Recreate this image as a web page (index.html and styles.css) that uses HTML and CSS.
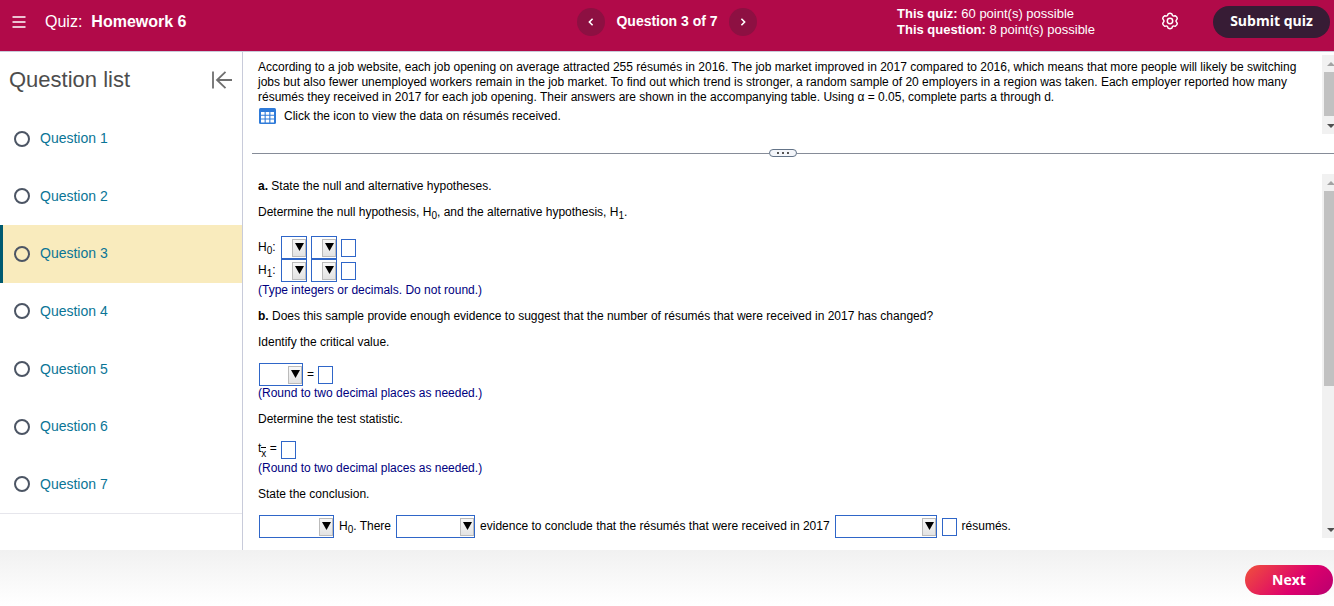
FILE: index.html
```html
<!DOCTYPE html>
<html lang="en">
<head>
<meta charset="utf-8">
<title>Quiz: Homework 6</title>
<link rel="stylesheet" href="styles.css">
</head>
<body>
<header class="topbar">
  <div class="topbar-left">
    <button class="plain-btn menu-btn" aria-label="Menu">
      <svg width="14" height="12" viewBox="0 0 14 12" fill="none" stroke="#fff" stroke-width="1.4"><path d="M0.5 1H13.5M0.5 6H13.5M0.5 11H13.5"/></svg>
    </button>
    <div class="quiz-name"><span>Quiz:</span><strong>Homework 6</strong></div>
  </div>
  <nav class="pager" aria-label="Question navigation">
    <button class="round-btn" aria-label="Previous question"><svg width="6" height="8" viewBox="0 0 6 8" fill="none" stroke="#fff" stroke-width="1.6"><path d="M4.6 0.8L1.4 4L4.6 7.2"/></svg></button>
    <span class="pager-label">Question 3 of 7</span>
    <button class="round-btn" aria-label="Next question"><svg width="6" height="8" viewBox="0 0 6 8" fill="none" stroke="#fff" stroke-width="1.6"><path d="M1.4 0.8L4.6 4L1.4 7.2"/></svg></button>
  </nav>
  <div class="topbar-right">
    <div class="points">
      <div><strong>This quiz:</strong> 60 point(s) possible</div>
      <div><strong>This question:</strong> 8 point(s) possible</div>
    </div>
    <button class="plain-btn gear-btn" aria-label="Settings">
      <svg width="18" height="18" viewBox="0 0 18 18" fill="none" stroke="#fff" stroke-width="1.5" stroke-linejoin="round"><path d="M7.200 1.800Q9 .6 10.800 1.800L11.500 3.500Q12 4 12.700 3.900L14.500 3.800Q16.300 4.700 16.300 6.700L15.200 8.300Q14.900 9 15.200 9.700L16.300 11.300Q16.300 13.300 14.500 14.200L12.700 14.100Q12 14 11.500 14.500L10.800 16.200Q9 17.400 7.200 16.200L6.500 14.500Q6 14 5.300 14.100L3.500 14.200Q1.700 13.300 1.700 11.300L2.800 9.700Q3.100 9 2.800 8.300L1.700 6.700Q1.700 4.700 3.500 3.800L5.300 3.900Q6 4 6.500 3.500z"/><circle cx="9" cy="9" r="2.700"/></svg>
    </button>
    <button class="submit-btn">Submit quiz</button>
  </div>
</header>

<main class="workspace">
  <aside class="sidebar">
    <div class="sidebar-head">
      <h1>Question list</h1>
      <button class="plain-btn" aria-label="Collapse question list">
        <svg width="20" height="18" viewBox="0 0 20 18" fill="none" stroke="#6f6f6f" stroke-width="1.8"><path d="M1 0.500V17.500M20 9H5.500M13.500 0.800L5 9L13.500 17.200"/></svg>
      </button>
    </div>
    <ul class="question-list">
      <li><a href="#q1"><span class="ring"></span>Question 1</a></li>
      <li><a href="#q2"><span class="ring"></span>Question 2</a></li>
      <li class="current"><a href="#q3" aria-current="page"><span class="ring"></span>Question 3</a></li>
      <li><a href="#q4"><span class="ring"></span>Question 4</a></li>
      <li><a href="#q5"><span class="ring"></span>Question 5</a></li>
      <li><a href="#q6"><span class="ring"></span>Question 6</a></li>
      <li><a href="#q7"><span class="ring"></span>Question 7</a></li>
    </ul>
  </aside>

  <section class="content">
    <div class="pane stem">
      <div class="pane-body">
        <p>According to a job website, each job opening on average attracted 255 résumés in 2016. The job market improved in 2017 compared to 2016, which means that more people will likely be switching jobs but also fewer unemployed workers remain in the job market. To find out which trend is stronger, a random sample of 20 employers in a region was taken. Each employer reported how many résumés they received in 2017 for each job opening. Their answers are shown in the accompanying table. Using α = 0.05, complete parts a through d.</p>
        <div class="data-link">
          <button class="plain-btn" aria-label="View data">
            <svg width="17" height="16" viewBox="0 0 17 16"><rect width="17" height="16" rx="1.500" fill="#2f7bd9"/><g fill="#fff"><path d="M2 4h3.600v2.800H2zM6.700 4h3.600v2.800H6.700zM11.400 4H15v2.800h-3.600zM2 7.800h3.600v2.800H2zM6.700 7.800h3.600v2.800H6.700zM11.400 7.800H15v2.800h-3.600zM2 11.600h3.600v2.800H2zM6.700 11.600h3.600v2.800H6.700zM11.400 11.600H15v2.800h-3.600z"/></g></svg>
          </button>
          <span>Click the icon to view the data on résumés received.</span>
        </div>
      </div>
      <div class="scrollbar" aria-hidden="true"><i class="arrow up"></i><i class="thumb"></i><i class="arrow down"></i></div>
    </div>

    <div class="splitter"><button class="grip" aria-label="Resize panes"><i></i><i></i><i></i></button></div>

    <div class="pane parts">
      <div class="pane-body">
        <p><strong>a.</strong> State the null and alternative hypotheses.</p>
        <p>Determine the null hypothesis, H<sub>0</sub>, and the alternative hypothesis, H<sub>1</sub>.</p>
        <div class="hypotheses">
          <div class="answer-row"><span class="hyp-label">H<sub>0</sub>:</span><select class="drop tiny" aria-label="H0 parameter"></select><select class="drop tiny" aria-label="H0 relation"></select><input class="blank" type="text" aria-label="H0 value"></div>
          <div class="answer-row"><span class="hyp-label">H<sub>1</sub>:</span><select class="drop tiny" aria-label="H1 parameter"></select><select class="drop tiny" aria-label="H1 relation"></select><input class="blank" type="text" aria-label="H1 value"></div>
          <p class="note">(Type integers or decimals. Do not round.)</p>
        </div>
        <p><strong>b.</strong> Does this sample provide enough evidence to suggest that the number of résumés that were received in 2017 has changed?</p>
        <p>Identify the critical value.</p>
        <div class="spaced">
          <div class="answer-row inset"><select class="drop small" aria-label="Critical value symbol"></select><span>=</span><input class="blank" type="text" aria-label="Critical value"></div>
          <p class="note">(Round to two decimal places as needed.)</p>
        </div>
        <p>Determine the test statistic.</p>
        <div>
          <div class="answer-row"><label for="tstat">t<span class="xbar">x</span> =</label><input class="blank" id="tstat" type="text"></div>
          <p class="note">(Round to two decimal places as needed.)</p>
        </div>
        <p>State the conclusion.</p>
        <div class="answer-row inset spaced conclusion">
          <select class="drop medium" aria-label="Decision"></select><span>H<sub>0</sub>. There</span><select class="drop medium-wide" aria-label="Is or is not sufficient"></select><span>evidence to conclude that the résumés that were received in 2017</span><select class="drop wide" aria-label="Comparison"></select><input class="blank" id="last" type="text"><label for="last">résumés.</label>
        </div>
      </div>
      <div class="scrollbar" aria-hidden="true"><i class="arrow up"></i><i class="thumb"></i><i class="arrow down"></i></div>
    </div>
  </section>
</main>

<footer class="bottombar"><button class="next-btn">Next</button></footer>
</body>
</html>
```
FILE: styles.css
```css
* { box-sizing: border-box; }

body {
  margin: 0;
  min-height: 100vh;
  display: flex;
  flex-direction: column;
  background: #fff;
  color: #000;
  font: 12px/15px "Liberation Sans", Arial, sans-serif;
}

h1, p, ul { margin: 0; padding: 0; }
button, input, select { font: inherit; margin: 0; }
svg { display: block; }

.plain-btn { padding: 0; border: 0; background: none; }

/* Top bar */
.topbar {
  display: grid;
  grid-template-columns: 1fr auto 1fr;
  align-items: center;
  height: 52px;
  padding: 0 4px 8px 12px;
  background: #b10a49;
  border-bottom: 1px solid #c8cbda;
  color: #fff;
}
.topbar-left { display: flex; align-items: center; gap: 19px; }
.quiz-name { display: flex; gap: 9px; font-size: 16px; }
.pager { display: flex; align-items: center; gap: 11px; margin-right: 8px; }
.pager-label { font-size: 14px; font-weight: bold; }
.round-btn {
  display: grid;
  place-items: center;
  width: 28px;
  height: 28px;
  padding: 0;
  border: 0;
  border-radius: 50%;
  background: #8d1042;
}
.topbar-right { display: flex; align-items: center; justify-content: flex-end; }
.points { margin-right: 66px; font-size: 13px; line-height: 16px; }
.gear-btn { padding-bottom: 2px; }
.submit-btn {
  width: 117px;
  height: 32px;
  margin-left: 34px;
  padding: 0 0 2px;
  border: 0;
  border-radius: 16px;
  background: #371c35;
  color: #fff;
  font: bold 14px "Open Sans", sans-serif;
}

/* Page body */
.workspace { display: flex; flex: 1; }

.sidebar { width: 243px; flex: none; border-right: 1px solid #c8cbda; }
.sidebar-head {
  display: flex;
  align-items: center;
  justify-content: space-between;
  height: 58px;
  padding: 0 10px 3px 9px;
}
.sidebar-head h1 { font-size: 22px; font-weight: normal; color: #4d4d4d; line-height: 28px; }
.question-list {
  display: grid;
  grid-template-rows: repeat(7, 1fr);
  height: 404px;
  list-style: none;
  border-bottom: 1px solid #e6e6ec;
}
.question-list li { border-left: 3px solid transparent; }
.question-list a {
  display: flex;
  align-items: center;
  gap: 10px;
  height: 100%;
  padding-left: 11px;
  color: #0a7596;
  font-size: 14px;
  text-decoration: none;
}
.question-list .current { background: #f9ebbd; border-left-color: #005a70; }
.ring { width: 16px; height: 16px; border: 2px solid #4c5564; border-radius: 50%; }

.content { flex: 1; min-width: 0; display: flex; flex-direction: column; }
.pane { display: flex; }
.pane-body { flex: 1; min-width: 0; }
.stem { margin-top: 3px; height: 79px; }
.stem .pane-body { padding: 5px 5px 0 15px; }
.data-link { display: flex; align-items: center; gap: 8px; margin: 3px 0 0 1px; }

.splitter { display: flex; align-items: center; height: 38px; margin: 0 0 2px 9px; }
.splitter::before, .splitter::after { content: ""; height: 1px; background: #868c98; }
.splitter::before { flex: 517; }
.splitter::after { flex: 537; }
.grip {
  display: flex;
  align-items: center;
  justify-content: center;
  gap: 3px;
  width: 28px;
  height: 8px;
  padding: 0;
  border: 1px solid #647488;
  border-radius: 4px;
  background: #f4f6fa;
}
.grip i { width: 2px; height: 2px; background: #555; }

.parts { flex: 1; padding-bottom: 12px; }
.parts .pane-body { display: flex; flex-direction: column; gap: 11px; padding: 5px 0 0 15px; }

sub { font-size: 10px; line-height: 0; vertical-align: -3px; }
.note { color: #000080; }

/* Answer fields */
.answer-row { display: flex; align-items: center; gap: 4px; height: 23px; }
.inset { margin-left: 1px; }
.spaced { margin-top: 2px; }
.hypotheses { padding-top: 5px; }
.hypotheses .note { margin-top: 1px; }
.hyp-label { width: 19px; }
.drop {
  appearance: none;
  height: 23px;
  padding: 0;
  border: 1px solid #2f66c8;
  border-radius: 0;
  background: #fff url("data:image/svg+xml,%3Csvg xmlns='http://www.w3.org/2000/svg' width='14' height='18'%3E%3ClinearGradient id='g' x2='0' y2='1'%3E%3Cstop stop-color='%23f8f8f8'/%3E%3Cstop offset='1' stop-color='%23e2e2e2'/%3E%3C/linearGradient%3E%3Crect x='.5' y='.5' width='13' height='17' fill='url(%23g)' stroke='%23bbb'/%3E%3Cpath d='M3 4h9L7.500 12z'/%3E%3C/svg%3E") no-repeat right 2px;
}
.tiny { width: 26px; }
.small { width: 44px; }
.medium { width: 75px; }
.medium-wide { width: 79px; }
.wide { width: 102px; }
.blank { width: 15px; height: 18px; padding: 0; border: 1px solid #2f66c8; background: #fff; }
.xbar {
  display: inline-block;
  height: 11px;
  padding-top: 2px;
  border-top: 1px solid #000;
  font-size: 10px;
  line-height: 8px;
  vertical-align: -5px;
}
.conclusion { gap: 5px; }

/* Scroll bars */
.scrollbar { display: flex; flex-direction: column; width: 12px; padding: 7px 0 6px 2px; background: #f1f1f1; }
.arrow { width: 0; height: 0; margin-left: 3px; border: 4px solid transparent; }
.arrow.up { border-top: 0; border-bottom-color: #a3a3a3; }
.arrow.down { border-bottom: 0; border-top-color: #505050; margin-top: auto; }
.thumb { height: 44px; margin-top: 6px; background: #c1c1c1; }
.parts .thumb { height: 195px; }

/* Bottom bar */
.bottombar {
  display: flex;
  justify-content: flex-end;
  align-items: center;
  height: 56px;
  padding: 4px 1px 0;
  background: linear-gradient(#f1f1f1, #fff);
}
.next-btn {
  width: 88px;
  height: 30px;
  padding: 0 0 2px;
  border: 0;
  border-radius: 15px;
  background: linear-gradient(135deg, #f0513c, #dd006c 60%, #b8006f);
  color: #fff;
  font: bold 14px "Open Sans", sans-serif;
}
```
